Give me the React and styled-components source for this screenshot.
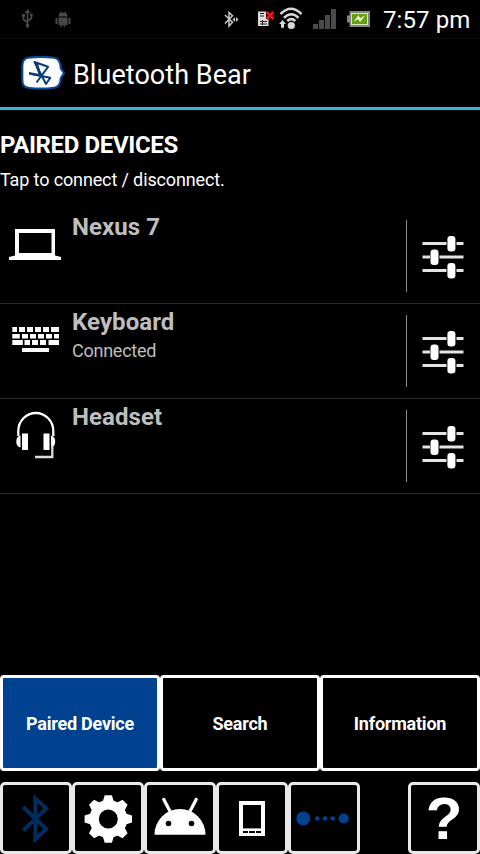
import React from "react";
import styled, { createGlobalStyle } from "styled-components";

const GlobalStyle = createGlobalStyle`
  body {
    margin: 0;
    background: #000;
    color: #fff;
    font-family: Roboto, "Liberation Sans", sans-serif;
  }
  svg {
    display: block;
    flex: none;
  }
`;

const Screen = styled.div`
  display: flex;
  flex-direction: column;
  width: 480px;
  height: 854px;
  overflow: hidden;
  background: #000;
`;

const StatusBar = styled.div`
  display: flex;
  align-items: center;
  justify-content: space-between;
  height: 38px;
  box-sizing: border-box;
  padding: 0 10px 0 20px;
`;

const StatusGroup = styled.div`
  display: flex;
  align-items: center;
  gap: ${({ $gap }) => $gap}px;
`;

const Clock = styled.span`
  width: 87px;
  margin-left: 3px;
  padding-top: 2px;
  font-size: 24px;
  line-height: 36px;
  letter-spacing: 0.1px;
  white-space: nowrap;
`;

const TitleBar = styled.header`
  display: flex;
  align-items: center;
  height: 72px;
  box-sizing: border-box;
  padding-left: 20px;
  border-top: 1px solid #0c0c0c;
  border-bottom: 3px solid #33b5e5;
`;

const AppTitle = styled.h1`
  margin: 0;
  padding: 4px 0 0 7px;
  font-size: 27px;
  font-weight: 400;
  line-height: 32px;
  letter-spacing: 0.05px;
`;

const Intro = styled.section`
  height: 99px;
  box-sizing: border-box;
  padding-top: 21px;
`;

const Heading = styled.h2`
  margin: 0;
  font-size: 24px;
  font-weight: 700;
  line-height: 28px;
  letter-spacing: -0.36px;
`;

const Hint = styled.p`
  margin: 9px 0 0;
  font-size: 18px;
  line-height: 24px;
  letter-spacing: -0.13px;
`;

const DeviceList = styled.ul`
  flex: 1;
  margin: 0;
  padding: 0;
  list-style: none;
`;

const DeviceRow = styled.li`
  display: flex;
  height: 95px;
  box-sizing: border-box;
  border-bottom: 1px solid #2a2a2a;
`;

const DeviceIcon = styled.div`
  width: 72px;
`;

const DeviceText = styled.div`
  flex: 1;
  padding-top: 3px;
  color: #bebebe;
`;

const DeviceName = styled.div`
  font-size: 24px;
  font-weight: 700;
  line-height: 30px;
  letter-spacing: 0.08px;
`;

const DeviceState = styled.div`
  font-size: 18px;
  line-height: 28px;
  letter-spacing: -0.25px;
`;

const DeviceSettings = styled.button`
  width: 74px;
  height: 72px;
  margin: 11px 0 0;
  padding: 0;
  border: 0;
  border-left: 1px solid #8a8a8a;
  background: none;
`;

const Tabs = styled.nav`
  display: flex;
  height: 96px;
  margin-bottom: 11px;
`;

const Tab = styled.button`
  flex: 1;
  padding: 0;
  border: 3px solid #fff;
  border-radius: 4px;
  background: ${({ $active }) => ($active ? "#00428f" : "#000")};
  color: #fff;
  font-family: inherit;
  font-size: 18px;
  font-weight: 700;
  letter-spacing: -0.22px;
`;

const Toolbar = styled.footer`
  display: flex;
  height: 72px;
`;

const Tool = styled.button`
  width: 72px;
  height: 72px;
  box-sizing: border-box;
  margin-left: ${({ $last }) => ($last ? "auto" : 0)};
  padding: 0;
  border: 3px solid #e8e8e8;
  border-radius: 5px;
  background: #000;
`;

function UsbIcon() {
  return (
    <svg width="14" height="22" viewBox="20 8 14 22" fill="none" stroke="#484848" strokeWidth="1.600">
      <path d="M27.500 12V25M23.500 16v3.500l4 3M31.500 15v3l-4 3" />
      <path d="M27.500 9l3 4h-6zM22 14h3v3h-3zM30 13.500h2.500v3H30zM26 24h3v3.500h-3z" fill="#484848" stroke="none" />
    </svg>
  );
}

function DebugIcon() {
  return (
    <svg width="18" height="22" viewBox="54 8 18 22" fill="#484848">
      <path d="M58.500 16.500q0-4 4.500-4t4.500 4zM58.500 17.500h9V25h-2.500v2h-1.500v-2h-1.500v2h-1.500v-2h-2zM55.500 18H57.500v6h-2zM68.500 18h2v6h-2z" />
      <path d="M60 11.500l1 2M66 11.500l-1 2" stroke="#484848" />
    </svg>
  );
}

function StatusBluetoothIcon() {
  return (
    <svg width="18" height="20" viewBox="223 9 18 20" fill="none" stroke="#c8c8c8" strokeWidth="1.500">
      <path d="M225 15l7.500 7.300-3.500 3.700V12.500l3.500 3.300L225 23.500" />
      <path d="M232.500 19.500l2.500-2.500v5zM236 17l2.500 2.500L236 22z" fill="#c8c8c8" stroke="none" />
    </svg>
  );
}

function SimIcon() {
  return (
    <svg width="18" height="20" viewBox="257 9 18 20">
      <path d="M258 11.500h8V19h2.500v7H258z" fill="#ddd" />
      <path d="M260 13.500h4M260 16h4M260 21.500h7M260 24h7M262.500 20v5" stroke="#222" fill="none" />
      <path d="M266.500 12l7 7M273.500 12l-7 7" stroke="#f01414" strokeWidth="2.600" />
    </svg>
  );
}

function WifiIcon() {
  return (
    <svg width="26" height="26" viewBox="278 6 26 26" fill="none" stroke="#d8d8d8" strokeWidth="2.500">
      <path d="M280.500 14q10.500-10.500 21 0M284 17.800q7.300-7 14.500 0M287.300 21q4-3.800 8 0" />
      <circle cx="291.300" cy="25.500" r="3.600" fill="#d8d8d8" stroke="none" />
      <path d="M282.500 20l3.400 4h-1.900v3.800h-3V24h-1.900z" fill="#d8d8d8" stroke="none" />
    </svg>
  );
}

function SignalIcon() {
  return (
    <svg width="24" height="26" viewBox="313 6 24 26" fill="#4a4a4a">
      <path d="M313 24h5v5h-5zM319 20h5v9h-5zM325 15h5v14h-5zM331 9h5v20h-5z" />
    </svg>
  );
}

function BatteryIcon() {
  return (
    <svg width="24" height="20" viewBox="347 9 24 20">
      <path d="M347 15.500h2.500V11H370v16h-20.500v-4.500H347z" fill="#858585" />
      <path d="M351 13h17v12h-17z" fill="#d8e8c0" />
      <path d="M352 14h15v10h-15z" fill="#62a010" />
      <path d="M353.500 22l5-7 1.500 3.500 5.500-3.500-5.500 7-2-3z" fill="#f4ffe0" />
    </svg>
  );
}

function Logo() {
  return (
    <svg width="46" height="36" viewBox="20 57 46 36">
      <path
        d="M28 59.800Q41 58 54 59.800Q60.500 60.500 60.800 70.500L64 75.200L60.800 80Q60.500 89 54 89.800Q41 91.500 28 89.800Q22.300 89 22.300 82V68Q22.300 61 28 59.800z"
        fill="#fff"
        stroke="#084a98"
        strokeWidth="2.100"
      />
      <path d="M30 75.800L50.300 79.800L46 86L34.500 64L48 68.800L36.500 84.500" fill="none" stroke="#083c7c" strokeWidth="2" strokeLinejoin="round" />
      <path d="M29 74l10 2v2.200l-10-1.700zM34 63.500l4 2 3 10-2 2z" fill="#083c7c" />
    </svg>
  );
}

function LaptopIcon() {
  return (
    <svg width="72" height="72" viewBox="0 209 72 72">
      <path d="M15 229h40v27H15zM19 233v20h32.500v-20z" fill="#fff" fillRule="evenodd" />
      <path d="M15 255.500h40l6 1.500v3H9v-3z" fill="#fff" />
    </svg>
  );
}

// [x, width] of every key, one array per keyboard row
const keyRows = [
  [[12.3, 4.7], [19, 6], [27, 6], [35, 6], [43, 6], [51, 8]],
  [[12.3, 7.5], [22, 6], [30, 6], [38, 6], [46, 6], [54, 5]],
  [[12.3, 10.5], [24.5, 5.5], [32, 6], [40, 6], [48.5, 10.5]],
  [[22, 27]],
];

function KeyboardIcon() {
  return (
    <svg width="72" height="72" viewBox="0 304 72 72" fill="#fff">
      {keyRows.map((keys, row) =>
        keys.map(([x, width]) => (
          <rect key={`${row}-${x}`} x={x} y={[327, 334, 340, 348][row]} width={width} height={[5, 4.5, 5, 4][row]} />
        ))
      )}
    </svg>
  );
}

function HeadsetIcon() {
  return (
    <svg width="72" height="72" viewBox="0 399 72 72" fill="none" stroke="#fff" strokeWidth="2.300">
      <path d="M18.300 436v-5a17.500 18 0 0 1 35 0v5" />
      <path d="M22 433.500h6v16.500h-6zM43.500 433.500h6V450h-6z" fill="#fff" stroke="none" />
      <path d="M20.500 435.500q-4.200 1-4.200 6t4.200 6zM51 435.500q4.200 1 4.200 6t-4.200 6z" fill="#fff" stroke="none" />
      <path d="M52.300 445v12H35" stroke="#ddd" />
    </svg>
  );
}

function SlidersIcon() {
  return (
    <svg width="73" height="72" viewBox="407 220 73 72">
      <path d="M422.500 243.500h24M456.500 243.500h7M422.500 257h7.500M439.500 257h24M422.500 270.500h24M456.500 270.500h7" stroke="#e4e4e4" strokeWidth="2.800" />
      <g fill="#fff">
        <rect x="447.400" y="236" width="8" height="15.500" rx="3.200" />
        <rect x="430.500" y="249.500" width="8" height="15.500" rx="3.200" />
        <rect x="447.400" y="263" width="8" height="15.500" rx="3.200" />
      </g>
    </svg>
  );
}

function BluetoothIcon() {
  return (
    <svg width="66" height="66" viewBox="3 785 66 66" fill="none" stroke="#002c60" strokeWidth="3.800">
      <path d="M23.200 807L46.300 829L35.300 839.200V798.300L46.300 808.500L23.200 830.500" />
    </svg>
  );
}

function GearIcon() {
  return (
    <svg width="66" height="66" viewBox="75 785 66 66">
      <circle cx="108.300" cy="819" r="14.200" fill="none" stroke="#fff" strokeWidth="9.400" />
      {[0, 45, 90, 135, 180, 225, 270, 315].map((angle) => (
        <path key={angle} d="M102.500 802.500l2.200-7.200h7.200l2.200 7.200z" fill="#fff" transform={`rotate(${angle} 108.300 819)`} />
      ))}
    </svg>
  );
}

function AndroidIcon() {
  return (
    <svg width="66" height="66" viewBox="147 785 66 66">
      <path d="M154.500 834.700a25.500 25.800 0 0 1 51 0z" fill="#fff" />
      <path d="M163.700 799.300l6 11.500M196.300 799.300l-6 11.500" stroke="#fff" strokeWidth="3.200" strokeLinecap="round" />
      <circle cx="168.500" cy="823.500" r="2.800" />
      <circle cx="191.500" cy="823.500" r="2.800" />
    </svg>
  );
}

function PhoneIcon() {
  return (
    <svg width="66" height="66" viewBox="219 785 66 66">
      <path d="M239 801h26v35h-26z" fill="#fff" />
      <path d="M243 805h18v23h-18zM243 831h5v2h-5zM249 831h6v2h-6zM256 831h5v2h-5z" />
      <path d="M243 828.500h18" stroke="#999" />
    </svg>
  );
}

function DiscoverIcon() {
  return (
    <svg width="66" height="66" viewBox="291 785 66 66" fill="#00428f">
      <circle cx="303.200" cy="818.500" r="6.900" />
      <circle cx="317.300" cy="818.500" r="2.300" />
      <circle cx="325" cy="818.500" r="2.300" />
      <circle cx="332.600" cy="818.500" r="2.300" />
      <circle cx="343.700" cy="818.500" r="5.100" />
    </svg>
  );
}

const HelpMark = styled.span`
  display: block;
  padding-top: 1px;
  color: #fff;
  font-family: "Liberation Sans", Arial, sans-serif;
  font-size: 60px;
  font-weight: 700;
  line-height: 65px;
  text-align: center;
`;

const devices = [
  { name: "Nexus 7", icon: <LaptopIcon /> },
  { name: "Keyboard", icon: <KeyboardIcon />, state: "Connected" },
  { name: "Headset", icon: <HeadsetIcon /> },
];

function Device({ device }) {
  return (
    <DeviceRow>
      <DeviceIcon>{device.icon}</DeviceIcon>
      <DeviceText>
        <DeviceName>{device.name}</DeviceName>
        {device.state && <DeviceState>{device.state}</DeviceState>}
      </DeviceText>
      <DeviceSettings aria-label="Device settings">
        <SlidersIcon />
      </DeviceSettings>
    </DeviceRow>
  );
}

function App() {
  return (
    <Screen>
      <GlobalStyle />
      <StatusBar>
        <StatusGroup $gap={20}>
          <UsbIcon />
          <DebugIcon />
        </StatusGroup>
        <StatusGroup $gap={9}>
          <StatusGroup $gap={3}>
            <StatusGroup $gap={16}>
              <StatusBluetoothIcon />
              <SimIcon />
            </StatusGroup>
            <WifiIcon />
          </StatusGroup>
          <StatusGroup $gap={10}>
            <SignalIcon />
            <BatteryIcon />
          </StatusGroup>
          <Clock>7:57 pm</Clock>
        </StatusGroup>
      </StatusBar>
      <TitleBar>
        <Logo />
        <AppTitle>Bluetooth Bear</AppTitle>
      </TitleBar>
      <Intro>
        <Heading>PAIRED DEVICES</Heading>
        <Hint>Tap to connect / disconnect.</Hint>
      </Intro>
      <DeviceList>
        {devices.map((device) => (
          <Device key={device.name} device={device} />
        ))}
      </DeviceList>
      <Tabs>
        <Tab $active>Paired Device</Tab>
        <Tab>Search</Tab>
        <Tab>Information</Tab>
      </Tabs>
      <Toolbar>
        <Tool aria-label="Bluetooth"><BluetoothIcon /></Tool>
        <Tool aria-label="Settings"><GearIcon /></Tool>
        <Tool aria-label="Android"><AndroidIcon /></Tool>
        <Tool aria-label="Phone"><PhoneIcon /></Tool>
        <Tool aria-label="Discoverable"><DiscoverIcon /></Tool>
        <Tool aria-label="Help" $last><HelpMark>?</HelpMark></Tool>
      </Toolbar>
    </Screen>
  );
}

export default App;
